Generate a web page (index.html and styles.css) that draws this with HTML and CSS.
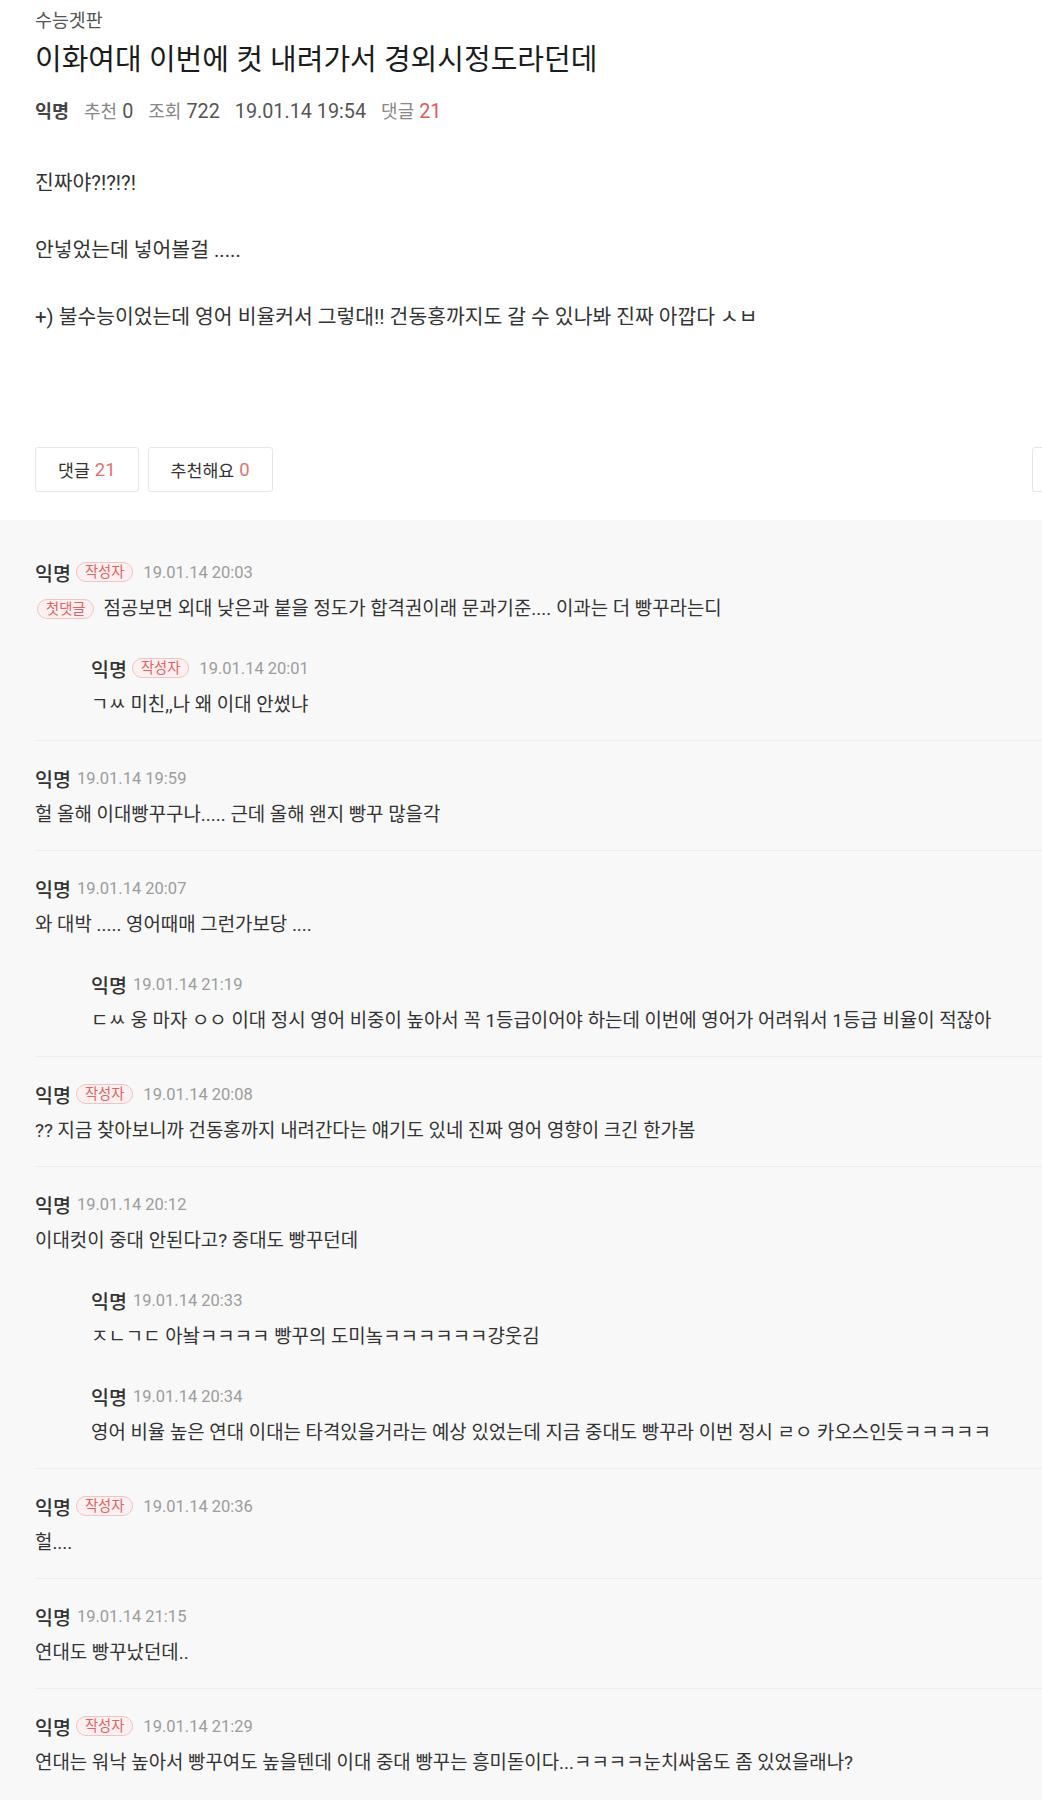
FILE: index.html
```html
<!DOCTYPE html>
<html lang="ko">
<head>
<meta charset="utf-8">
<title>수능겟판</title>
<link rel="stylesheet" href="styles.css">
</head>
<body>
<div class="article">
  <div class="board">수능겟판</div>
  <h1 class="title">이화여대 이번에 컷 내려가서 경외시정도라던데</h1>
  <div class="info">
    <span class="author">익명</span>
    <span class="item"><span class="lbl">추천</span><span class="num">0</span></span>
    <span class="item"><span class="lbl">조회</span><span class="num">722</span></span>
    <span class="item"><span class="num">19.01.14 19:54</span></span>
    <span class="item"><span class="lbl">댓글</span><span class="num red">21</span></span>
  </div>
  <div class="content">
    <p>진짜야?!?!?!</p>
    <p>안넣었는데 넣어볼걸 .....</p>
    <p>+) 불수능이었는데 영어 비율커서 그렇대!! 건동홍까지도 갈 수 있나봐 진짜 아깝다 ㅅㅂ</p>
  </div>
  <div class="actions">
    <button class="btn">댓글 <span class="cnt">21</span></button>
    <button class="btn">추천해요 <span class="cnt">0</span></button>
    <button class="btn btn-more"></button>
  </div>
</div>

<div class="comments">
  <div class="thread">
    <div class="cmt">
      <div class="cmt-head"><span class="nick">익명</span><span class="badge">작성자</span><span class="time">19.01.14 20:03</span></div>
      <div class="cmt-body"><span class="badge badge-first">첫댓글</span>점공보면 외대 낮은과 붙을 정도가 합격권이래 문과기준.... 이과는 더 빵꾸라는디</div>
    </div>
    <div class="cmt reply">
      <div class="cmt-head"><span class="nick">익명</span><span class="badge">작성자</span><span class="time">19.01.14 20:01</span></div>
      <div class="cmt-body">ㄱㅆ 미친,,나 왜 이대 안썼냐</div>
    </div>
  </div>

  <div class="thread">
    <div class="cmt">
      <div class="cmt-head"><span class="nick">익명</span><span class="time">19.01.14 19:59</span></div>
      <div class="cmt-body">헐 올해 이대빵꾸구나..... 근데 올해 왠지 빵꾸 많을각</div>
    </div>
  </div>

  <div class="thread">
    <div class="cmt">
      <div class="cmt-head"><span class="nick">익명</span><span class="time">19.01.14 20:07</span></div>
      <div class="cmt-body">와 대박 ..... 영어때매 그런가보당 ....</div>
    </div>
    <div class="cmt reply">
      <div class="cmt-head"><span class="nick">익명</span><span class="time">19.01.14 21:19</span></div>
      <div class="cmt-body">ㄷㅆ 웅 마자 ㅇㅇ 이대 정시 영어 비중이 높아서 꼭 1등급이어야 하는데 이번에 영어가 어려워서 1등급 비율이 적잖아</div>
    </div>
  </div>

  <div class="thread">
    <div class="cmt">
      <div class="cmt-head"><span class="nick">익명</span><span class="badge">작성자</span><span class="time">19.01.14 20:08</span></div>
      <div class="cmt-body">?? 지금 찾아보니까 건동홍까지 내려간다는 얘기도 있네 진짜 영어 영향이 크긴 한가봄</div>
    </div>
  </div>

  <div class="thread">
    <div class="cmt">
      <div class="cmt-head"><span class="nick">익명</span><span class="time">19.01.14 20:12</span></div>
      <div class="cmt-body">이대컷이 중대 안된다고? 중대도 빵꾸던데</div>
    </div>
    <div class="cmt reply">
      <div class="cmt-head"><span class="nick">익명</span><span class="time">19.01.14 20:33</span></div>
      <div class="cmt-body">ㅈㄴㄱㄷ 아놬ㅋㅋㅋㅋ 빵꾸의 도미놐ㅋㅋㅋㅋㅋㅋ걍웃김</div>
    </div>
    <div class="cmt reply">
      <div class="cmt-head"><span class="nick">익명</span><span class="time">19.01.14 20:34</span></div>
      <div class="cmt-body">영어 비율 높은 연대 이대는 타격있을거라는 예상 있었는데 지금 중대도 빵꾸라 이번 정시 ㄹㅇ 카오스인듯ㅋㅋㅋㅋㅋ</div>
    </div>
  </div>

  <div class="thread">
    <div class="cmt">
      <div class="cmt-head"><span class="nick">익명</span><span class="badge">작성자</span><span class="time">19.01.14 20:36</span></div>
      <div class="cmt-body">헐....</div>
    </div>
  </div>

  <div class="thread">
    <div class="cmt">
      <div class="cmt-head"><span class="nick">익명</span><span class="time">19.01.14 21:15</span></div>
      <div class="cmt-body">연대도 빵꾸났던데..</div>
    </div>
  </div>

  <div class="thread">
    <div class="cmt">
      <div class="cmt-head"><span class="nick">익명</span><span class="badge">작성자</span><span class="time">19.01.14 21:29</span></div>
      <div class="cmt-body">연대는 워낙 높아서 빵꾸여도 높을텐데 이대 중대 빵꾸는 흥미돋이다...ㅋㅋㅋㅋ눈치싸움도 좀 있었을래나?</div>
    </div>
  </div>
</div>
</body>
</html>
```

FILE: styles.css
```css
html, body {
  margin: 0;
  padding: 0;
  overflow-x: hidden;
}

body {
  font-family: Roboto, "Noto Sans CJK KR", "Noto Sans", sans-serif;
  color: #333;
  background: #fff;
}

.article {
  padding: 9px 0 28px 35px;
}

.board {
  font-size: 18.4px;
  line-height: 24px;
  color: #555;
}

.title {
  margin: 8px 0 0;
  font-size: 29px;
  line-height: 38px;
  font-weight: 400;
  color: #1c1c1c;
}

.info {
  margin-top: 21px;
  height: 24px;
  display: flex;
  align-items: baseline;
  gap: 15px;
  line-height: 24px;
}

.author {
  font-size: 18.5px;
  font-weight: 700;
  color: #444;
}

.item {
  display: inline-flex;
  align-items: baseline;
  gap: 5px;
}

.lbl {
  font-size: 18px;
  color: #888;
}

.num {
  font-size: 19.8px;
  color: #555;
}

.num.red {
  color: #e05a5a;
}

.content {
  margin-top: 43px;
  font-size: 20.4px;
  line-height: 33.5px;
  color: #333;
}

.content p {
  margin: 0 0 33.5px;
}

.content p:last-child {
  margin-bottom: 0;
}

.actions {
  margin-top: 112.5px;
  display: flex;
  gap: 9px;
  overflow: hidden;
}

.btn {
  box-sizing: border-box;
  height: 45px;
  padding: 0 22px;
  display: inline-flex;
  align-items: center;
  gap: 5px;
  border: 1px solid #e6e6e6;
  border-radius: 3px;
  background: #fff;
  box-shadow: 0 1px 1px rgba(0, 0, 0, 0.03);
  font-family: Roboto, "Noto Sans CJK KR", sans-serif;
  font-size: 17.3px;
  color: #333;
}

.cnt {
  font-size: 18.5px;
  color: #e07070;
}

.btn-more {
  width: 100px;
  flex: none;
  margin-left: auto;
  margin-right: -90px;
}

.comments {
  background: #f8f8f8;
  padding: 15px 0 40px 35px;
}

.thread {
  padding: 25px 0 22px;
  border-bottom: 1px solid #ececec;
}

.thread:last-child {
  border-bottom: none;
}

.cmt-head {
  display: flex;
  align-items: center;
  height: 24px;
}

.nick {
  font-size: 19.5px;
  font-weight: 500;
  color: #333;
}

.time {
  margin-left: 6px;
  font-size: 16.5px;
  color: #9c9c9c;
}

.badge + .time {
  margin-left: 10px;
}

.badge {
  box-sizing: border-box;
  display: inline-flex;
  align-items: center;
  height: 20px;
  margin-left: 5px;
  padding: 0 8px;
  border: 1px solid #f2c3c3;
  border-radius: 10px;
  background: #fdf0f0;
  color: #e06262;
  font-size: 14.3px;
  line-height: 18px;
}

.badge-first {
  margin-left: 2px;
  margin-right: 9px;
  vertical-align: 1px;
}

.cmt-body {
  margin-top: 12px;
  font-size: 18.9px;
  line-height: 26px;
  color: #333;
}

.reply {
  margin-left: 56px;
  margin-top: 34px;
}
```
